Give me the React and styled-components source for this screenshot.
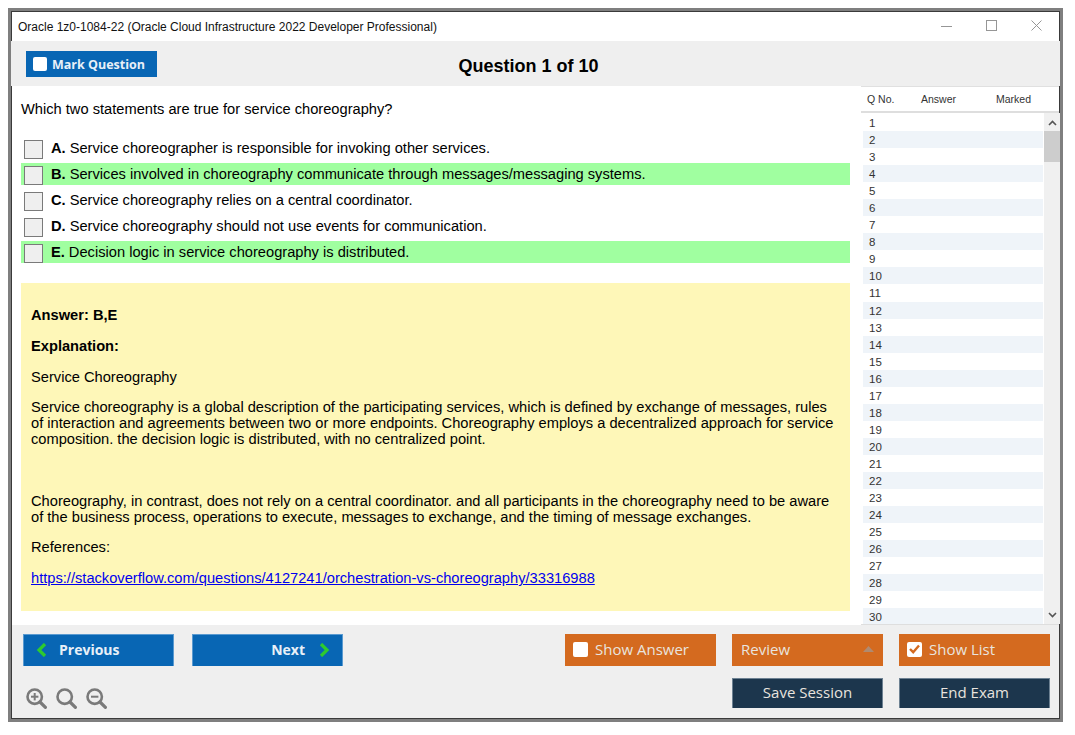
import React from "react";
import styled, { createGlobalStyle } from "styled-components";

const GlobalStyle = createGlobalStyle`
  html, body {
    margin: 0;
    padding: 0;
    background: #fff;
  }
  body {
    font-family: "Liberation Sans", Arial, sans-serif;
    color: #000;
  }
`;

const ExamWindow = styled.div`
  box-sizing: border-box;
  width: 1055px;
  height: 714px;
  margin: 8px 0 0 8px;
  border: 3px solid #7f7f7f;
  display: flex;
  flex-direction: column;
  outline: 1px solid #3a3a3a;
  outline-offset: -4px;
`;

const TitleBar = styled.div`
  height: 30px;
  flex: none;
  display: flex;
  align-items: center;
  justify-content: space-between;
  padding: 0 18px 0 7px;
  background: #fff;
  font-size: 12px;
  color: #111;
`;

const TitleText = styled.span`
  margin-top: 2px;
`;

const WindowControls = styled.div`
  display: flex;
  align-items: center;
  gap: 34px;
  margin-bottom: 1px;
`;

const Toolbar = styled.div`
  height: 45px;
  flex: none;
  box-sizing: border-box;
  position: relative;
  display: flex;
  align-items: center;
  justify-content: center;
  padding-right: 14px;
  background: #efefef;
`;

const QuestionCount = styled.div`
  font-size: 18px;
  font-weight: 700;
  margin-top: 6px;
`;

const MarkButton = styled.div`
  position: absolute;
  left: 15px;
  top: 10px;
  box-sizing: border-box;
  width: 131px;
  height: 26px;
  display: flex;
  align-items: center;
  gap: 5px;
  padding-left: 7px;
  background: #0866b4;
  color: #e8f0f8;
  font-family: "Open Sans", sans-serif;
  font-size: 12.5px;
  font-weight: 700;
`;

const WhiteBox = styled.span`
  box-sizing: border-box;
  width: ${(p) => p.$size || 14}px;
  height: ${(p) => p.$size || 14}px;
  border-radius: 2px;
  background: #fff;
  flex: none;
  display: flex;
  align-items: center;
  justify-content: center;
`;

const Main = styled.div`
  flex: 1;
  min-height: 0;
  display: flex;
  background: #fff;
`;

const QuestionPane = styled.div`
  width: 850px;
  flex: none;
  box-sizing: border-box;
  padding: 15px 11px 0 10px;
  font-size: 14.67px;
`;

const QuestionText = styled.div`
  height: 36px;
  line-height: 17px;
`;

const Option = styled.div`
  height: 22px;
  margin-bottom: 4px;
  display: flex;
  align-items: center;
  background: ${(p) => (p.$correct ? "#a0ffa0" : "transparent")};
  padding-left: 3px;
`;

const OptionBox = styled.span`
  box-sizing: border-box;
  width: 19px;
  height: 19px;
  margin-top: 2px;
  background: #efefef;
  border: 1px solid #7a7a7a;
  flex: none;
`;

const OptionLetter = styled.b`
  margin-left: 8px;
  margin-right: 4px;
`;

const AnswerPanel = styled.div`
  box-sizing: border-box;
  height: 328px;
  margin-top: 20px;
  padding: 24px 10px 0;
  background: #fef7b8;
  line-height: 16px;
`;

const Paragraph = styled.p`
  margin: 0 0 ${(p) => p.$after ?? 14}px;
  font-weight: ${(p) => (p.$bold ? 700 : 400)};
`;

const Link = styled.a`
  color: #0000ee;
  text-decoration: underline;
`;

const SidePane = styled.div`
  flex: 1;
  display: flex;
  flex-direction: column;
  border-top: 1px solid #e0e0e0;
  min-height: 0;
`;

const ListHeader = styled.div`
  height: 26px;
  flex: none;
  box-sizing: border-box;
  display: grid;
  grid-template-columns: 54px 75px 1fr;
  align-items: center;
  padding-left: 6px;
  border-bottom: 2px solid #dedede;
  font-size: 10.5px;
  color: #333;
`;

const ListBody = styled.div`
  flex: 1;
  min-height: 0;
  display: flex;
  overflow: hidden;
  border-bottom: 1px solid #dedede;
`;

const Rows = styled.div`
  flex: 1;
  padding: 1px 1px 0 2px;
`;

const Row = styled.div`
  height: 17.05px;
  line-height: 19px;
  padding-left: 6px;
  font-size: 11.5px;
  color: #333;
  background: ${(p) => (p.$alt ? "#eff4f9" : "#fff")};
`;

const ScrollBar = styled.div`
  width: 16px;
  flex: none;
  background: #f0f0f0;
  display: flex;
  flex-direction: column;
  align-items: center;
  justify-content: space-between;
  position: relative;
  padding: 7px 0 6px;
  box-sizing: border-box;
`;

const ScrollThumb = styled.div`
  position: absolute;
  top: 18px;
  left: 0;
  width: 100%;
  height: 31px;
  background: #cdcdcd;
`;

const Footer = styled.div`
  height: 94px;
  flex: none;
  box-sizing: border-box;
  padding: 9px 10px 0 12px;
  display: flex;
  justify-content: space-between;
  background: #efefef;
`;

const FooterLeft = styled.div`
  display: flex;
  flex-direction: column;
`;

const NavButtons = styled.div`
  display: flex;
  gap: 18px;
`;

const ActionButton = styled.div`
  box-sizing: border-box;
  width: 151px;
  height: ${(p) => p.$h || 32}px;
  display: flex;
  align-items: center;
  justify-content: ${(p) => p.$justify || "flex-start"};
  gap: ${(p) => p.$gap ?? 7}px;
  padding: 0 ${(p) => p.$pad ?? 7}px ${(p) => p.$lift ?? 3}px;
  background: ${(p) => p.$bg};
  color: ${(p) => p.$fg || "#e9e4df"};
  font-family: "Open Sans", sans-serif;
  font-size: ${(p) => p.$size || 15}px;
  font-weight: ${(p) => p.$weight || 400};
  border: 1px solid ${(p) => p.$line || "transparent"};
  border-bottom: none;
`;

const ZoomTools = styled.div`
  display: flex;
  gap: 9px;
  margin: 22px 0 0 3px;
`;

const ActionGrid = styled.div`
  display: grid;
  grid-template-columns: repeat(3, 151px);
  grid-template-rows: 32px 30px;
  column-gap: 16px;
  row-gap: 12px;
`;

const Push = styled.div`
  flex: 1;
`;

function ZoomIcon({ kind }) {
  return (
    <svg width="21" height="21" viewBox="0 0 21 21" fill="none" stroke="#7a7a7a" strokeWidth="2.6">
      <circle cx="8.7" cy="8.7" r="7.2" />
      <path d="M14 14l5.4 5.4" strokeWidth="3.2" strokeLinecap="round" />
      {kind !== "reset" && <path d="M5 8.7h7.4" strokeWidth="2" />}
      {kind === "in" && <path d="M8.7 5v7.4" strokeWidth="2" />}
    </svg>
  );
}

const options = [
  ["A.", "Service choreographer is responsible for invoking other services.", false],
  ["B.", "Services involved in choreography communicate through messages/messaging systems.", true],
  ["C.", "Service choreography relies on a central coordinator.", false],
  ["D.", "Service choreography should not use events for communication.", false],
  ["E.", "Decision logic in service choreography is distributed.", true],
];

const rows = Array.from({ length: 30 }, (_, i) => i + 1);

export default function App() {
  return (
    <>
      <GlobalStyle />
      <ExamWindow>
        <TitleBar>
          <TitleText>Oracle 1z0-1084-22 (Oracle Cloud Infrastructure 2022 Developer Professional)</TitleText>
          <WindowControls>
            <svg width="11" height="11" viewBox="0 0 11 11" stroke="#969696" fill="none">
              <path d="M0 6.5h11" />
            </svg>
            <svg width="11" height="11" viewBox="0 0 11 11" stroke="#969696" fill="none">
              <rect x="0.5" y="0.5" width="10" height="10" />
            </svg>
            <svg width="11" height="11" viewBox="0 0 11 11" stroke="#969696" fill="none">
              <path d="M0.5 0.5l10 10M10.5 0.5l-10 10" />
            </svg>
          </WindowControls>
        </TitleBar>
        <Toolbar>
          <MarkButton>
            <WhiteBox $size={14} />
            Mark Question
          </MarkButton>
          <QuestionCount>Question 1 of 10</QuestionCount>
        </Toolbar>
        <Main>
          <QuestionPane>
            <QuestionText>Which two statements are true for service choreography?</QuestionText>
            {options.map(([letter, text, correct]) => (
              <Option key={letter} $correct={correct}>
                <OptionBox />
                <OptionLetter>{letter}</OptionLetter>
                {text}
              </Option>
            ))}
            <AnswerPanel>
              <Paragraph $bold $after={15}>Answer: B,E</Paragraph>
              <Paragraph $bold $after={15}>Explanation:</Paragraph>
              <Paragraph>Service Choreography</Paragraph>
              <Paragraph $after={46}>
                Service choreography is a global description of the participating services, which is defined by exchange
                of messages, rules of interaction and agreements between two or more endpoints. Choreography employs a
                decentralized approach for service composition. the decision logic is distributed, with no centralized
                point.
              </Paragraph>
              <Paragraph>
                Choreography, in contrast, does not rely on a central coordinator. and all participants in the
                choreography need to be aware of the business process, operations to execute, messages to exchange, and
                the timing of message exchanges.
              </Paragraph>
              <Paragraph $after={15}>References:</Paragraph>
              <Link href="#">https://stackoverflow.com/questions/4127241/orchestration-vs-choreography/33316988</Link>
            </AnswerPanel>
          </QuestionPane>
          <SidePane>
            <ListHeader>
              <span>Q No.</span>
              <span>Answer</span>
              <span>Marked</span>
            </ListHeader>
            <ListBody>
              <Rows>
                {rows.map((n) => (
                  <Row key={n} $alt={n % 2 === 0}>{n}</Row>
                ))}
              </Rows>
              <ScrollBar>
                <ScrollThumb />
                <svg width="9" height="6" viewBox="0 0 9 6" fill="none" stroke="#555" strokeWidth="1.6">
                  <path d="M1 5l3.5-3.5L8 5" />
                </svg>
                <svg width="9" height="6" viewBox="0 0 9 6" fill="none" stroke="#555" strokeWidth="1.6">
                  <path d="M1 1l3.5 3.5L8 1" />
                </svg>
              </ScrollBar>
            </ListBody>
          </SidePane>
        </Main>
        <Footer>
          <FooterLeft>
            <NavButtons>
              <ActionButton $bg="#0866b4" $line="#5a9ad0" $weight={700} $size={14} $gap={12} $pad={12} $lift={2} $fg="#e8f0f8">
                <svg width="11" height="14" viewBox="0 0 11 14" fill="none" stroke="#2ecb2e" strokeWidth="3.2">
                  <path d="M9 1L3 7l6 6" />
                </svg>
                Previous
              </ActionButton>
              <ActionButton $bg="#0866b4" $line="#5a9ad0" $weight={700} $size={14} $gap={14} $pad={12} $lift={2} $fg="#e8f0f8" $justify="flex-end">
                Next
                <svg width="11" height="14" viewBox="0 0 11 14" fill="none" stroke="#2ecb2e" strokeWidth="3.2">
                  <path d="M2 1l6 6-6 6" />
                </svg>
              </ActionButton>
            </NavButtons>
            <ZoomTools>
              <ZoomIcon kind="in" />
              <ZoomIcon kind="reset" />
              <ZoomIcon kind="out" />
            </ZoomTools>
          </FooterLeft>
          <ActionGrid>
            <ActionButton $bg="#d46a1f">
              <WhiteBox $size={15} />
              Show Answer
            </ActionButton>
            <ActionButton $bg="#d46a1f" $justify="space-between" $pad={8}>
              Review
              <svg width="11" height="6" viewBox="0 0 11 6" fill="#b08a70">
                <path d="M0 6l5.5-6L11 6z" />
              </svg>
            </ActionButton>
            <ActionButton $bg="#d46a1f">
              <WhiteBox $size={15}>
                <svg width="11" height="10" viewBox="0 0 11 10" fill="none" stroke="#d46a1f" strokeWidth="2.4">
                  <path d="M1 5l3.2 3.2L10 1.5" />
                </svg>
              </WhiteBox>
              Show List
            </ActionButton>
            <Push />
            <ActionButton $h={30} $bg="#1c364d" $justify="center" $line="#6d8192">Save Session</ActionButton>
            <ActionButton $h={30} $bg="#1c364d" $justify="center" $line="#6d8192">End Exam</ActionButton>
          </ActionGrid>
        </Footer>
      </ExamWindow>
    </>
  );
}
